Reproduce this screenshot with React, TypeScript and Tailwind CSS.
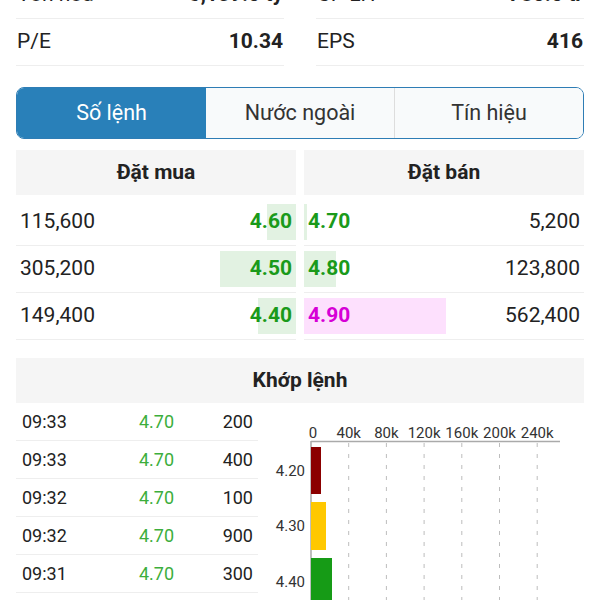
import React from "react";

const buys = [
  { qty: "115,600", price: "4.60", bar: 29 },
  { qty: "305,200", price: "4.50", bar: 76 },
  { qty: "149,400", price: "4.40", bar: 38 },
];
const asks = [
  { qty: "5,200", price: "4.70", bar: 3, pink: false },
  { qty: "123,800", price: "4.80", bar: 32, pink: false },
  { qty: "562,400", price: "4.90", bar: 142, pink: true },
];
const matches = [
  { t: "09:33", p: "4.70", q: "200" },
  { t: "09:33", p: "4.70", q: "400" },
  { t: "09:32", p: "4.70", q: "100" },
  { t: "09:32", p: "4.70", q: "900" },
  { t: "09:31", p: "4.70", q: "300" },
];

function Chart() {
  const x0 = 53;
  const step = 37.7;
  const ticks = ["0", "40k", "80k", "120k", "160k", "200k", "240k"];
  const bars = [
    { label: "4.20", y: 44, h: 47, w: 10, c: "#8b0000" },
    { label: "4.30", y: 99, h: 48, w: 15, c: "#ffc800" },
    { label: "4.40", y: 155, h: 48, w: 21, c: "#169b16" },
  ];
  return (
    <svg width="342" height="199" viewBox="0 0 342 199" className="block">
      {ticks.map((t, i) => (
        <g key={t}>
          {i > 0 && (
            <line
              x1={x0 + step * i}
              x2={x0 + step * i}
              y1={40}
              y2={199}
              stroke="#bdbdbd"
              strokeWidth="1"
              strokeDasharray="4 7"
            />
          )}
          <text
            x={x0 + step * i + (i === 0 ? 2 : 0)}
            y={35}
            textAnchor="middle"
            fontSize="15"
            fill="#333"
            fontFamily="Roboto, sans-serif"
          >
            {t}
          </text>
        </g>
      ))}
      <line x1={x0} x2={302} y1={38.5} y2={38.5} stroke="#aaa" strokeWidth="1.5" />
      <line x1={x0} x2={x0} y1={38} y2={199} stroke="#aaa" strokeWidth="1.5" />
      {bars.map((b) => (
        <g key={b.label}>
          <rect x={x0} y={b.y} width={b.w} height={b.h} fill={b.c} />
          <text
            x={47}
            y={b.y + b.h / 2 + 5}
            textAnchor="end"
            fontSize="15"
            fill="#333"
            fontFamily="Roboto, sans-serif"
          >
            {b.label}
          </text>
        </g>
      ))}
    </svg>
  );
}

export default function App() {
  return (
    <div
      className="w-[600px] h-[600px] overflow-hidden bg-white px-4 text-[#222]"
      style={{ fontFamily: "Roboto, 'Noto Sans', sans-serif" }}
    >
      {/* stats */}
      <div className="grid grid-cols-2 gap-x-8 -mt-[28px]">
        <div className="flex items-center justify-between h-[47px] border-b border-[#eeeeee] text-[21px] px-px">
          <span>Vốn hóa</span>
          <span className="font-bold">6,159.0 tỷ</span>
        </div>
        <div className="flex items-center justify-between h-[47px] border-b border-[#eeeeee] text-[21px] px-px">
          <span>CP LH</span>
          <span className="font-bold">780.0 tr</span>
        </div>
        <div className="flex items-center justify-between h-[47px] border-b border-[#eeeeee] text-[21px] px-px">
          <span>P/E</span>
          <span className="font-bold">10.34</span>
        </div>
        <div className="flex items-center justify-between h-[47px] border-b border-[#eeeeee] text-[21px] px-px">
          <span>EPS</span>
          <span className="font-bold">416</span>
        </div>
      </div>

      {/* tabs */}
      <div className="mt-[21px] flex h-[52px] rounded-lg border border-[#2e7db5] overflow-hidden text-[21.5px]">
        <div className="w-[189px] bg-[#2980b9] text-white flex items-center justify-center">Số lệnh</div>
        <div className="flex-1 bg-[#f8fafb] flex items-center justify-center text-[#333] border-r border-[#dddddd]">
          Nước ngoài
        </div>
        <div className="flex-1 bg-[#f8fafb] flex items-center justify-center text-[#333]">Tín hiệu</div>
      </div>

      {/* order book */}
      <div className="mt-[11px] grid grid-cols-2 gap-2">
        <div>
          <div className="h-[45px] bg-[#f5f5f5] flex items-center justify-center font-bold text-[21px]">Đặt mua</div>
          <div className="mt-1">
            {buys.map((r) => (
              <div key={r.qty} className="h-[47px] border-b border-[#eeeeee] py-[5px]">
                <div
                  className="h-full flex items-center justify-between pl-1 pr-1 text-[21px]"
                  style={{
                    background: `linear-gradient(to left, #e2f2e2 ${r.bar}px, transparent ${r.bar}px)`,
                  }}
                >
                  <span>{r.qty}</span>
                  <span className="font-bold text-[#1a9a1a]">{r.price}</span>
                </div>
              </div>
            ))}
          </div>
        </div>
        <div>
          <div className="h-[45px] bg-[#f5f5f5] flex items-center justify-center font-bold text-[21px]">Đặt bán</div>
          <div className="mt-1">
            {asks.map((r) => (
              <div key={r.qty} className="h-[47px] border-b border-[#eeeeee] py-[5px]">
                <div
                  className="h-full flex items-center justify-between pl-1 pr-1 text-[21px]"
                  style={{
                    background: `linear-gradient(to right, ${r.pink ? "#fde0fd" : "#e2f2e2"} ${r.bar}px, transparent ${r.bar}px)`,
                  }}
                >
                  <span className={r.pink ? "font-bold text-[#d600d6]" : "font-bold text-[#1a9a1a]"}>
                    {r.price}
                  </span>
                  <span>{r.qty}</span>
                </div>
              </div>
            ))}
          </div>
        </div>
      </div>

      {/* matched */}
      <div className="mt-[18px] h-[45px] bg-[#f5f5f5] flex items-center justify-center font-bold text-[21px]">
        Khớp lệnh
      </div>
      <div className="flex">
        <div className="w-[242px] shrink-0">
          {matches.map((m, i) => (
            <div key={i} className="h-[38px] border-b border-[#eeeeee] flex items-center text-[18px]">
              <span className="w-[123px] pl-[6px]">{m.t}</span>
              <span className="flex-1 text-[#3cae3c]">{m.p}</span>
              <span className="pr-[5px]">{m.q}</span>
            </div>
          ))}
        </div>
        <div className="-mr-4">
          <Chart />
        </div>
      </div>
    </div>
  );
}
